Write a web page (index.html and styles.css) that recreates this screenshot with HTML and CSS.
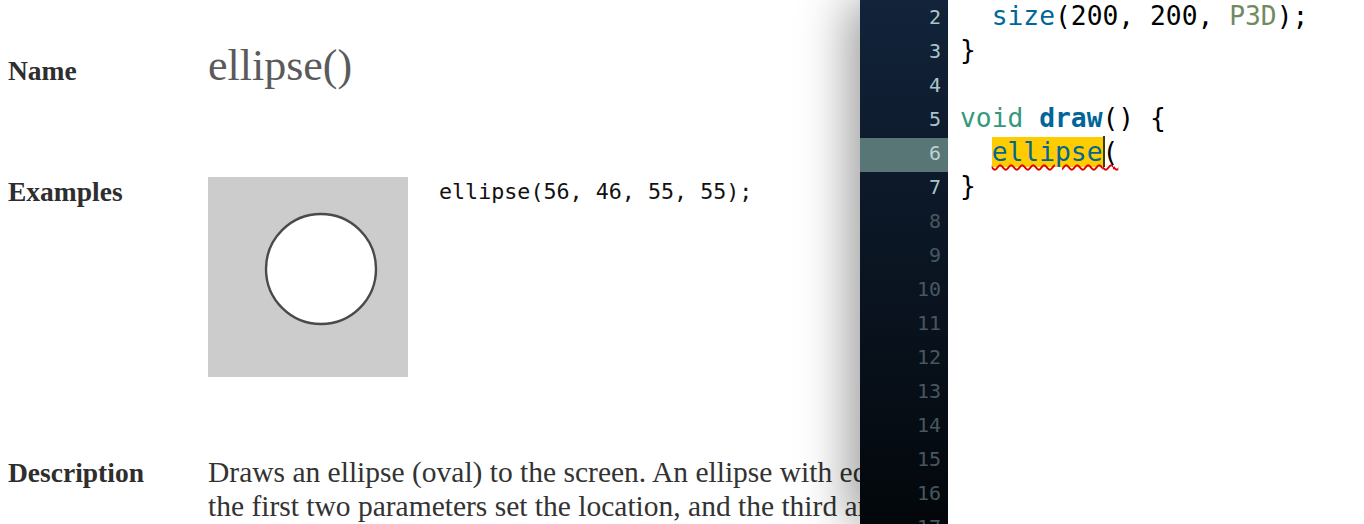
FILE: index.html
```html
<!DOCTYPE html>
<html lang="en">
<head>
<meta charset="utf-8">
<title>ellipse() \ Reference</title>
<link rel="stylesheet" href="styles.css">
</head>
<body>
<main class="doc">
  <section class="row row-name">
    <h3 class="label">Name</h3>
    <h1 class="title">ellipse()</h1>
  </section>
  <section class="row row-examples">
    <h3 class="label">Examples</h3>
    <div class="example">
      <svg class="example-img" width="200" height="200" viewBox="0 0 200 200" aria-hidden="true">
        <rect x="0" y="0" width="200" height="200" fill="#cccccc"/>
        <circle cx="113" cy="92" r="55" fill="#ffffff" stroke="#4a4a4a" stroke-width="2.4"/>
      </svg>
      <pre class="example-code">ellipse(56, 46, 55, 55);</pre>
    </div>
  </section>
  <section class="row row-desc">
    <h3 class="label">Description</h3>
    <p class="desc">Draws an ellipse (oval) to the screen. An ellipse with equal width and height is a circle. By default,<br>the first two parameters set the location, and the third and fourth parameters set the shape's width and height.</p>
  </section>
</main>

<aside class="editor">
  <div class="editor-body">
    <ol class="gutter">
      <li class="ln">1</li>
      <li class="ln">2</li>
      <li class="ln">3</li>
      <li class="ln">4</li>
      <li class="ln">5</li>
      <li class="ln ln-active">6</li>
      <li class="ln">7</li>
      <li class="ln ln-dim">8</li>
      <li class="ln ln-dim">9</li>
      <li class="ln ln-dim">10</li>
      <li class="ln ln-dim">11</li>
      <li class="ln ln-dim">12</li>
      <li class="ln ln-dim">13</li>
      <li class="ln ln-dim">14</li>
      <li class="ln ln-dim">15</li>
      <li class="ln ln-dim">16</li>
      <li class="ln ln-dim">17</li>
    </ol>
    <div class="code">
      <div class="line"><span class="kw-type">void</span> <span class="fn-bold">setup</span>() {</div>
      <div class="line">  <span class="fn">size</span>(200, 200, <span class="const">P3D</span>);</div>
      <div class="line">}</div>
      <div class="line"> </div>
      <div class="line"><span class="kw-type">void</span> <span class="fn-bold">draw</span>() {</div>
      <div class="line">  <span class="err"><span class="sel fn">ellipse</span><span class="caret"></span>(</span></div>
      <div class="line">}</div>
    </div>
  </div>
</aside>
</body>
</html>
```

FILE: styles.css
```css
html, body {
  margin: 0;
  padding: 0;
  background: #ffffff;
  overflow: hidden;
  height: 100%;
}

body {
  font-family: "Liberation Serif", "Times New Roman", serif;
  color: #333333;
}

.doc {
  padding: 41px 0 0 8px;
  overflow: hidden;
}

.row {
  display: grid;
  grid-template-columns: 200px 1fr;
  align-items: baseline;
}

.label {
  margin: 0;
  font-size: 27.5px;
  line-height: 34px;
  font-weight: 700;
  color: #2e2e2e;
}

.title {
  margin: 0;
  font-size: 44px;
  line-height: 50px;
  font-weight: 400;
  color: #5a5a5a;
}

.row-examples {
  margin-top: 84px;
  align-items: start;
}

.example {
  display: flex;
  align-items: flex-start;
  gap: 31px;
  padding-top: 2px;
}

.example-img {
  display: block;
  flex: none;
}

.example-code {
  margin: 0;
  font-family: "DejaVu Sans Mono", monospace;
  font-size: 21.7px;
  line-height: 30px;
  color: #111111;
}

.row-desc {
  margin-top: 78px;
}

.desc {
  margin: 0;
  font-size: 29.5px;
  line-height: 34px;
  color: #333333;
  white-space: nowrap;
}

/* Editor overlay */
.editor {
  position: absolute;
  top: 0;
  right: 0;
  bottom: 0;
  width: 504px;
  background: #ffffff;
  box-shadow: -12px 0 45px rgba(0, 0, 0, 0.38);
  overflow: hidden;
}

.editor-body {
  display: flex;
  height: 100%;
}

.gutter {
  list-style: none;
  margin: 0;
  padding: 0;
  width: 88px;
  flex: none;
  background: linear-gradient(#12233a, #03070b);
  font-family: "DejaVu Sans Mono", monospace;
  font-size: 20px;
}

.ln {
  height: 34px;
  line-height: 30px;
  text-align: right;
  padding-right: 7px;
  box-sizing: border-box;
  color: #a9c5c9;
}

.ln:first-child {
  margin-top: -32px;
}

.ln-active {
  background: #587676;
  color: #bdd3d3;
}

.ln-dim {
  color: #46575f;
}

.code {
  flex: 1;
  margin-top: -35px;
  padding-left: 12px;
  font-family: "DejaVu Sans Mono", monospace;
  font-size: 26.3px;
  color: #000000;
}

.line {
  height: 34px;
  line-height: 34px;
  white-space: pre;
}

.kw-type {
  color: #33997e;
}

.fn {
  color: #006699;
}

.fn-bold {
  color: #006699;
  font-weight: 700;
}

.const {
  color: #718a62;
}

.sel {
  background: #ffcc00;
}

.err {
  text-decoration: underline wavy #dd0000;
  text-decoration-thickness: 1.5px;
  text-underline-offset: 3px;
}

.caret {
  display: inline-block;
  width: 0;
  height: 31px;
  border-left: 2px solid #3b3b18;
  margin-right: -2px;
  vertical-align: -6px;
}
```
